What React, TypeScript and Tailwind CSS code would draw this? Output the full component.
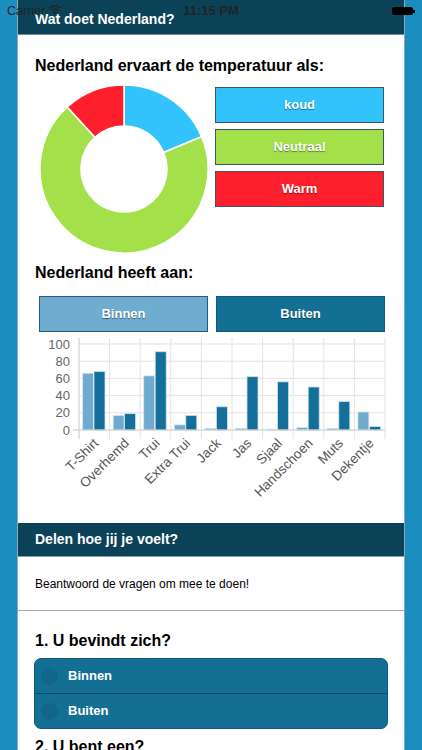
import React from "react";

const cats = [
  { n: "T-Shirt", a: 66, b: 68 },
  { n: "Overhemd", a: 17, b: 19 },
  { n: "Trui", a: 63, b: 91 },
  { n: "Extra Trui", a: 6, b: 17 },
  { n: "Jack", a: 2, b: 27 },
  { n: "Jas", a: 2, b: 62 },
  { n: "Sjaal", a: 1, b: 56 },
  { n: "Handschoen", a: 3, b: 50 },
  { n: "Muts", a: 2, b: 33 },
  { n: "Dekentje", a: 21, b: 4 },
];

function arc(cx: number, cy: number, r: number, ri: number, a0: number, a1: number) {
  const p = (rad: number, a: number) => {
    const t = (a * Math.PI) / 180;
    return [cx + rad * Math.sin(t), cy - rad * Math.cos(t)];
  };
  const [x0, y0] = p(r, a0);
  const [x1, y1] = p(r, a1);
  const [x2, y2] = p(ri, a1);
  const [x3, y3] = p(ri, a0);
  const large = a1 - a0 > 180 ? 1 : 0;
  return `M${x0} ${y0} A${r} ${r} 0 ${large} 1 ${x1} ${y1} L${x2} ${y2} A${ri} ${ri} 0 ${large} 0 ${x3} ${y3} Z`;
}

function Donut() {
  return (
    <svg width="170" height="170" viewBox="0 0 170 170">
      <path d={arc(85, 85, 84, 43, 0, 67.4)} fill="#33c3fc" stroke="#fff" strokeWidth="1.5" />
      <path d={arc(85, 85, 84, 43, 67.4, 317.5)} fill="#a4e04a" stroke="#fff" strokeWidth="1.5" />
      <path d={arc(85, 85, 84, 43, 317.5, 360)} fill="#fe1f2c" stroke="#fff" strokeWidth="1.5" />
    </svg>
  );
}

function Chart() {
  const x0 = 48;
  const x1 = 354;
  const y0 = 96;
  const k = 0.86;
  const cw = (x1 - x0) / 10;
  return (
    <svg width="360" height="188" viewBox="0 0 360 188" style={{ fontFamily: "'Liberation Sans', Arial, sans-serif" }}>
      {[20, 40, 60, 80, 100].map((v) => (
        <line key={v} x1={x0} x2={x1} y1={y0 - v * k} y2={y0 - v * k} stroke="#e3e3e3" strokeWidth="1" />
      ))}
      {Array.from({ length: 11 }).map((_, i) => (
        <line key={i} x1={x0 + i * cw} x2={x0 + i * cw} y1={4} y2={105} stroke={i === 0 ? "#c8c8c8" : "#e3e3e3"} strokeWidth="1" />
      ))}
      {[0, 20, 40, 60, 80, 100].map((v) => (
        <text key={v} x={39} y={y0 - v * k + 4.5} textAnchor="end" fontSize="13" fill="#666">
          {v}
        </text>
      ))}
      {cats.map((c, i) => {
        const gx = x0 + i * cw;
        return (
          <g key={c.n}>
            <rect x={gx + 3.5} y={y0 - c.a * k} width={11} height={c.a * k} fill="#70abcf" stroke="#dbeaf3" strokeWidth="0.8" />
            <rect x={gx + 15} y={y0 - c.b * k} width={11} height={c.b * k} fill="#14709a" stroke="#cfe0ea" strokeWidth="0.8" />
          </g>
        );
      })}
      <line x1={x0 - 6} x2={x1} y1={y0} y2={y0} stroke="#c8c8c8" strokeWidth="1.2" />
      {cats.map((c, i) => {
        const cx = x0 + i * cw + cw / 2 + 5;
        const cy = 110;
        return (
          <text key={c.n} x={cx} y={cy} textAnchor="end" fontSize="13.5" fill="#555" transform={`rotate(-45 ${cx} ${cy})`}>
            {c.n}
          </text>
        );
      })}
    </svg>
  );
}

export default function App() {
  const font = { fontFamily: "'Liberation Sans', Arial, Helvetica, sans-serif" };
  const shadow = { textShadow: "0 1px 1px rgba(0,0,0,0.45)" };
  return (
    <div className="relative min-h-[750px] h-[750px] overflow-hidden bg-[#1b8ebf] px-[17px]" style={font}>
      <div className="flex h-full flex-col border-x border-[#8fa9b5] bg-white">
        <div className="flex h-[35px] shrink-0 items-center border-b border-[#6d8e9c] bg-[#0c4257] pl-[17px] pt-[5px]">
          <span className="text-[14px] font-bold text-white">Wat doet Nederland?</span>
        </div>

        <div className="flex h-[488px] shrink-0 flex-col">
          <div className="pl-[17px] pt-[21px] text-[16px] font-bold leading-[20px] text-black">Nederland ervaart de temperatuur als:</div>
          <div className="mt-[8px] flex">
            <div className="ml-[21px] h-[170px] w-[170px]">
              <Donut />
            </div>
            <div className="ml-[6px] mt-[3px] flex w-[169px] flex-col gap-[6px]">
              <div className="flex h-[36px] items-center justify-center border border-[#3b5866] bg-[#33c3fc] text-[13px] font-bold text-white" style={shadow}>koud</div>
              <div className="flex h-[36px] items-center justify-center border border-[#3b5866] bg-[#a4e04a] text-[13px] font-bold text-white" style={shadow}>Neutraal</div>
              <div className="flex h-[36px] items-center justify-center border border-[#3b5866] bg-[#fe1f2c] text-[13px] font-bold text-white" style={shadow}>Warm</div>
            </div>
          </div>
          <div className="mt-[9px] pl-[17px] text-[16px] font-bold leading-[20px] text-black">Nederland heeft aan:</div>
          <div className="mt-[13px] flex gap-[8px] pl-[21px]">
            <div className="flex h-[36px] w-[169px] items-center justify-center border border-[#2c5c75] bg-[#6fadd0] text-[13px] font-bold text-white" style={shadow}>Binnen</div>
            <div className="flex h-[36px] w-[169px] items-center justify-center border border-[#0f5a7a] bg-[#146f94] text-[13px] font-bold text-white" style={shadow}>Buiten</div>
          </div>
          <div className="mt-[2px] pl-[13px]">
            <Chart />
          </div>
        </div>

        <div className="flex h-[34px] shrink-0 items-center border-b border-[#8aa2ad] bg-[#0c4257] pl-[17px]">
          <span className="text-[14px] font-bold text-white">Delen hoe jij je voelt?</span>
        </div>
        <div className="flex h-[54px] shrink-0 items-center border-b border-[#a8a8a8] pl-[17px] text-[12px] text-black">
          Beantwoord de vragen om mee te doen!
        </div>
        <div className="flex flex-col px-[16px]">
          <div className="pl-[1px] pt-[20px] text-[16px] font-bold leading-[20px] text-black">1. U bevindt zich?</div>
          <div className="mt-[7px] overflow-hidden rounded-[7px] border border-[#0f5a7a] bg-[#146f94]">
            <div className="flex h-[35px] items-center border-b border-[#0c4a66]">
              <div className="ml-[6px] h-[17px] w-[17px] rounded-full bg-[#12658b]" />
              <span className="ml-[10px] text-[13px] font-bold text-white">Binnen</span>
            </div>
            <div className="flex h-[34px] items-center">
              <div className="ml-[6px] h-[17px] w-[17px] rounded-full bg-[#12658b]" />
              <span className="ml-[10px] text-[13px] font-bold text-white">Buiten</span>
            </div>
          </div>
          <div className="mt-[8px] pl-[1px] text-[16px] font-bold leading-[20px] text-black">2. U bent een?</div>
        </div>
      </div>

      <div className="absolute left-0 right-0 top-0 flex h-[22px] items-center text-[12.5px] text-[#1e2428]">
        <span className="ml-[7px]">Carrier</span>
        <svg className="ml-[3px] -mt-[3px]" width="14" height="11" viewBox="0 0 14 11">
          <path d="M7 10.5 L5 8.2 A3 3 0 0 1 9 8.2 Z" fill="#1e2428" />
          <path d="M3.4 6.6 A5.2 5.2 0 0 1 10.6 6.6" stroke="#1e2428" strokeWidth="1.5" fill="none" />
          <path d="M1.2 4.3 A8.2 8.2 0 0 1 12.8 4.3" stroke="#1e2428" strokeWidth="1.5" fill="none" />
        </svg>
        <span className="absolute left-1/2 -translate-x-1/2 text-[13px] font-semibold">11:15 PM</span>
        <div className="absolute right-[7px] top-[7px] flex items-center">
          <div className="h-[8px] w-[21px] rounded-[2px] bg-black" />
          <div className="h-[3px] w-[2px] bg-black" />
        </div>
      </div>
    </div>
  );
}
